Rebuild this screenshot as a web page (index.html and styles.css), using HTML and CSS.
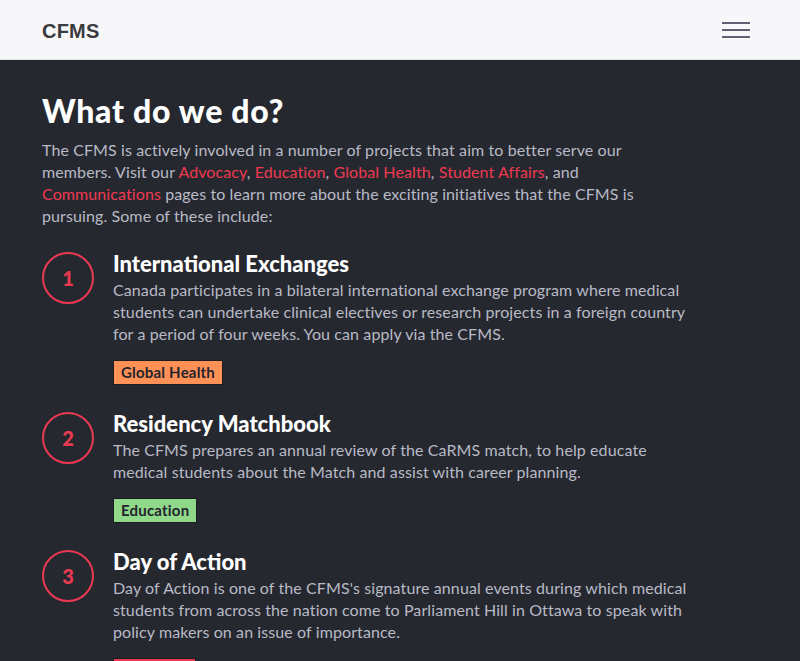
FILE: index.html
```html
<!DOCTYPE html>
<html lang="en">
<head>
<meta charset="utf-8">
<title>CFMS</title>
<link rel="stylesheet" href="styles.css">
</head>
<body>
<header class="navbar">
  <a class="brand" href="#">CFMS</a>
  <button class="toggler" aria-label="Menu">
    <svg width="28" height="16" viewBox="0 0 28 16"><path d="M0 1h28M0 8h28M0 15h28" stroke="#5f6172" stroke-width="2"/></svg>
  </button>
</header>
<main class="content">
  <h1 class="title">What do we do?</h1>
  <p class="intro">The CFMS is actively involved in a number of projects that aim to better serve our members. Visit our <a href="#">Advocacy</a>, <a href="#">Education</a>, <a href="#">Global Health</a>, <a href="#">Student Affairs</a>, and <a href="#">Communications</a> pages to learn more about the exciting initiatives that the CFMS is pursuing. Some of these include:</p>
  <ol class="projects">
    <li class="project">
      <span class="num">1</span>
      <div class="body">
        <h2 class="ptitle">International Exchanges</h2>
        <p class="desc">Canada participates in a bilateral international exchange program where medical students can undertake clinical electives or research projects in a foreign country for a period of four weeks. You can apply via the CFMS.</p>
        <span class="tag tag-orange">Global Health</span>
      </div>
    </li>
    <li class="project">
      <span class="num">2</span>
      <div class="body">
        <h2 class="ptitle">Residency Matchbook</h2>
        <p class="desc">The CFMS prepares an annual review of the CaRMS match, to help educate medical students about the Match and assist with career planning.</p>
        <span class="tag tag-green">Education</span>
      </div>
    </li>
    <li class="project">
      <span class="num">3</span>
      <div class="body">
        <h2 class="ptitle">Day of Action</h2>
        <p class="desc">Day of Action is one of the CFMS's signature annual events during which medical students from across the nation come to Parliament Hill in Ottawa to speak with policy makers on an issue of importance.</p>
        <span class="tag tag-red">Advocacy</span>
      </div>
    </li>
  </ol>
</main>
</body>
</html>
```
FILE: styles.css
```css
* { box-sizing: border-box; }
html, body { margin: 0; padding: 0; }
body {
  background: #262830;
  font-family: Lato, "Open Sans", sans-serif;
  overflow: hidden;
}
.navbar {
  height: 60px;
  background: #f7f7f9;
  border-bottom: 1px solid #e2e2e6;
  display: flex;
  align-items: center;
  justify-content: space-between;
  padding: 0 50px 0 42px;
}
.brand {
  font-family: "Liberation Sans", Arial, sans-serif;
  font-weight: 700;
  font-size: 20px;
  color: #3b3b3f;
  text-decoration: none;
  padding-top: 3px;
  letter-spacing: 0.2px;
}
.toggler {
  background: none;
  border: 0;
  padding: 0;
  display: flex;
}
.content {
  padding: 33px 42px 0 42px;
}
.title {
  margin: 0 0 10px;
  font-size: 32px;
  line-height: 36px;
  font-weight: 900;
  color: #ffffff;
  letter-spacing: 0.7px;
}
.intro {
  margin: 0 0 25px;
  width: 610px;
  font-size: 16px;
  line-height: 22px;
  color: #b8bac5;
  letter-spacing: 0.1px;
}
.intro a { color: #f0394f; text-decoration: none; }
.projects {
  list-style: none;
  margin: 0;
  padding: 0;
  display: flex;
  flex-direction: column;
  gap: 27px;
}
.project {
  display: flex;
  gap: 19px;
}
.num {
  flex: none;
  width: 52px;
  height: 52px;
  border: 2px solid #ea3a51;
  border-radius: 50%;
  display: flex;
  align-items: center;
  justify-content: center;
  color: #ea3a51;
  font-weight: 900;
  font-size: 20px;
}
.body { width: 585px; }
.ptitle {
  margin: 0 0 3px;
  font-size: 22px;
  line-height: 24px;
  font-weight: 900;
  color: #ffffff;
  letter-spacing: 0;
}
.desc {
  margin: 0 0 15px;
  font-size: 16px;
  line-height: 22px;
  color: #b8bac5;
  letter-spacing: 0.1px;
}
.tag {
  display: inline-block;
  padding: 2px 7px;
  border: 1px solid #1c1d24;
  font-size: 15px;
  line-height: 19px;
  font-weight: 700;
  color: #23242b;
  letter-spacing: 0.2px;
}
.tag-orange { background: #ff9157; }
.tag-green { background: #90d98b; }
.tag-red { background: #ea3a51; }
```
